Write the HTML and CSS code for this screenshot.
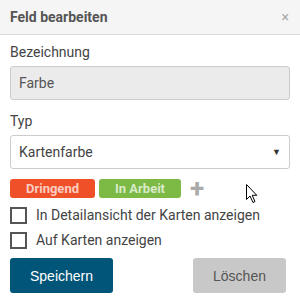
FILE: index.html
```html
<!DOCTYPE html>
<html lang="de">
<head>
    <meta charset="UTF-8">
    <title>Feld bearbeiten</title>
    <link rel="stylesheet" href="styles.css">
</head>
<body>
    <div class="dialog">
        <div class="dialog-head">
            <span class="dialog-title">Feld bearbeiten</span>
            <span class="dialog-close">&times;</span>
        </div>
        <div class="dialog-body">
            <label class="field-label" for="name">Bezeichnung</label>
            <input class="field-input" id="name" type="text" value="Farbe" disabled>

            <label class="field-label" for="type">Typ</label>
            <div class="field-select" id="type">
                <span>Kartenfarbe</span>
                <span class="select-arrow">&#9660;</span>
            </div>

            <div class="tags">
                <span class="tag tag-red">Dringend</span>
                <span class="tag tag-green">In Arbeit</span>
                <span class="tag-add">+</span>
            </div>

            <label class="check"><span class="check-box"></span>In Detailansicht der Karten anzeigen</label>
            <label class="check"><span class="check-box"></span>Auf Karten anzeigen</label>

            <div class="actions">
                <button class="btn btn-save">Speichern</button>
                <button class="btn btn-delete">Löschen</button>
            </div>
        </div>
    </div>

    <!-- mouse pointer over the dialog -->
    <svg class="pointer" width="13" height="21" viewBox="0 0 13 21">
        <path d="M1.5 1.5 L1.5 16.5 L5 13 L8 19.5 L10 18.5 L7.2 12.3 L11.8 12.3 Z" fill="#fff" stroke="#000" stroke-width="1"/>
    </svg>
</body>
</html>
```

FILE: styles.css
```css
body { margin: 0; font-family: Roboto, "Liberation Sans", Arial, sans-serif; background: #fff; color: #444; }
.dialog { width: 300px; height: 301px; background: #fff; }
.dialog-head { height: 35px; background: #f5f5f5; border-bottom: 1px solid #dcdcdc; display: flex; align-items: center; justify-content: space-between; padding: 0 10px; box-sizing: border-box; }
.dialog-title { font-size: 14px; font-weight: bold; color: #555; }
.dialog-close { font-size: 14px; color: #aaa; margin-right: 1px; }
.dialog-body { padding: 8px 10px 0; }
.field-label { display: block; font-size: 14px; line-height: 18px; margin-bottom: 5px; }
.field-input { display: block; width: 100%; height: 34px; box-sizing: border-box; margin: 0 0 12px; padding: 0 8px; border: 1px solid #ccc; border-radius: 3px; background: #ebebeb; font: 14px Roboto, sans-serif; color: #555; }
.field-select { height: 34px; box-sizing: border-box; border: 1px solid #ccc; border-radius: 3px; display: flex; align-items: center; justify-content: space-between; padding: 0 8px; font-size: 14px; color: #444; }
.select-arrow { font-size: 9px; color: #333; }
.tags { display: flex; align-items: center; gap: 4px; margin-top: 10px; height: 19px; }
.tag { height: 19px; line-height: 19px; border-radius: 3px; font-size: 13px; font-weight: bold; color: rgba(255,255,255,0.72); text-align: center; }
.tag-red { background: #f05028; width: 85px; }
.tag-green { background: #7cb945; width: 82px; }
.tag-add { font-size: 26px; font-weight: bold; color: #aaa; margin-left: 5px; line-height: 19px; }
.check { display: flex; align-items: center; font-size: 14px; height: 16px; margin-top: 9px; }
.check:first-of-type { margin-top: 10px; }
.check-box { width: 13px; height: 13px; border: 2px solid #555; margin-right: 9px; }
.actions { display: flex; justify-content: space-between; margin-top: 10px; padding-right: 4px; }
.btn { height: 35px; border: none; border-radius: 3px; font: 14px "Liberation Sans", Arial, sans-serif; }
.btn-save { width: 103px; background: #015578; color: #fff; }
.btn-delete { width: 93px; background: #c8c8c8; color: #555; }
.pointer { position: absolute; left: 245px; top: 183px; }
```
